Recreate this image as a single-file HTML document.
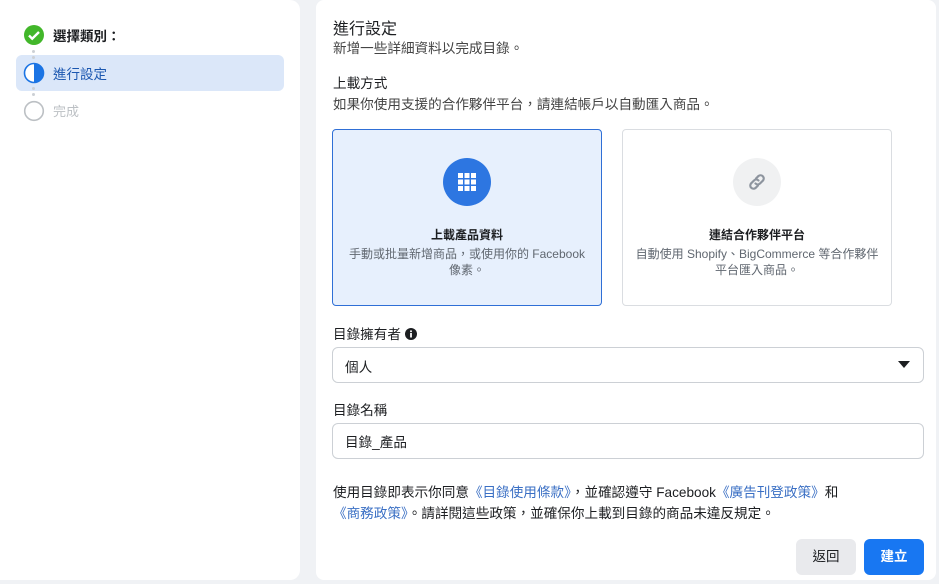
<!DOCTYPE html>
<html><head><meta charset="utf-8"><style>
*{box-sizing:border-box;margin:0;padding:0}
body{width:939px;height:584px;background:#f0f2f5;font-family:"Liberation Sans","Noto Sans CJK TC",sans-serif;color:#1c1e21;position:relative;overflow:hidden;font-size:13px}
.lp{position:absolute;left:0;top:0;width:300px;height:580px;background:#fff;border-radius:0 10px 10px 0}
.rp{position:absolute;left:316px;top:0;width:620px;height:580px;background:#fff;border-radius:8px}
.a{position:absolute;white-space:nowrap}
.t{font-size:13.6px}
.sel{position:absolute;left:16px;top:55px;width:268px;height:36px;background:#dbe7f9;border-radius:6px}
.dot{position:absolute;left:32px;width:3px;height:3px;border-radius:2px;background:#ccd0d5}
.card{position:absolute;top:129px;width:270px;height:177px;border-radius:4px;text-align:center}
.box{position:absolute;left:332px;width:592px;height:36px;border:1px solid #ccd0d5;border-radius:6px}
.blue{color:#3a6fc4}
</style></head><body>
<div class="lp">
<div class="sel"></div>
<svg class="a" style="left:23px;top:24px" width="22" height="22"><circle cx="11" cy="11" r="10" fill="#42b72a"/><path d="M6 11.5l3.2 3.2L16 8" stroke="#fff" stroke-width="2.4" fill="none"/></svg>
<div class="a" style="left:53px;top:25px;font-size:13.5px;font-weight:bold">選擇類別：</div>
<div class="dot" style="top:50px"></div><div class="dot" style="top:56px"></div>
<svg class="a" style="left:23px;top:62px" width="22" height="22"><circle cx="11" cy="11" r="9.5" fill="#fff" stroke="#1b74e4" stroke-width="1.6"/><path d="M11 1.5a9.5 9.5 0 0 1 0 19z" fill="#1b74e4"/></svg>
<div class="a" style="left:53px;top:63px;color:#1b57b0;font-size:13.5px">進行設定</div>
<div class="dot" style="top:87px"></div><div class="dot" style="top:93px"></div>
<svg class="a" style="left:23px;top:100px" width="22" height="22"><circle cx="11" cy="11" r="9.3" fill="#fff" stroke="#bcc0c4" stroke-width="1.6"/></svg>
<div class="a" style="left:53px;top:101px;color:#bcc0c4">完成</div>
</div>
<div class="rp"></div>
<div class="a" style="left:333px;top:15px;font-size:16px">進行設定</div>
<div class="a t" style="left:333px;top:37px;color:#444">新增一些詳細資料以完成目錄。</div>
<div class="a t" style="left:333px;top:72px">上載方式</div>
<div class="a t" style="left:333px;top:93px;color:#444">如果你使用支援的合作夥伴平台，請連結帳戶以自動匯入商品。</div>
<div class="card" style="left:332px;background:#e7f0fd;border:1px solid #2f6fd6">
<svg style="position:absolute;left:110px;top:28px" width="48" height="48"><circle cx="24" cy="24" r="24" fill="#2d76e1"/><g fill="#fff"><rect x="15" y="15" width="5" height="5"/><rect x="21.5" y="15" width="5" height="5"/><rect x="28" y="15" width="5" height="5"/><rect x="15" y="21.5" width="5" height="5"/><rect x="21.5" y="21.5" width="5" height="5"/><rect x="28" y="21.5" width="5" height="5"/><rect x="15" y="28" width="5" height="5"/><rect x="21.5" y="28" width="5" height="5"/><rect x="28" y="28" width="5" height="5"/></g></svg>
<div style="position:absolute;left:0;right:0;top:96px;font-weight:bold;font-size:12px">上載產品資料</div>
<div style="position:absolute;left:10px;right:10px;top:116px;font-size:12px;color:#606770;line-height:16px">手動或批量新增商品，或使用你的 Facebook 像素。</div>
</div>
<div class="card" style="left:622px;background:#fff;border:1px solid #dadde1">
<svg style="position:absolute;left:110px;top:28px" width="48" height="48"><circle cx="24" cy="24" r="24" fill="#f0f1f2"/><g stroke="#8d949e" stroke-width="2.2" fill="none" stroke-linecap="round"><path d="M23 20.5l2.5-2.5a3.2 3.2 0 0 1 4.5 4.5l-3 3a3.2 3.2 0 0 1-4.5 0"/><path d="M25 27.5l-2.5 2.5a3.2 3.2 0 0 1-4.5-4.5l3-3a3.2 3.2 0 0 1 4.5 0"/></g></svg>
<div style="position:absolute;left:0;right:0;top:96px;font-weight:bold;font-size:12px">連結合作夥伴平台</div>
<div style="position:absolute;left:10px;right:10px;top:116px;font-size:12px;color:#606770;line-height:16px">自動使用 Shopify、BigCommerce 等合作夥伴平台匯入商品。</div>
</div>
<div class="a t" style="left:333px;top:323px">目錄擁有者 <svg width="12" height="12" style="vertical-align:-1px"><circle cx="6" cy="6" r="6" fill="#1c1e21"/><rect x="5.1" y="5" width="1.8" height="4.5" fill="#fff"/><circle cx="6" cy="3.2" r="1" fill="#fff"/></svg></div>
<div class="box" style="top:347px"></div>
<div class="a t" style="left:345px;top:356px">個人</div>
<svg class="a" style="left:898px;top:361px" width="12" height="8"><path d="M0 0h12L6 7z" fill="#1c1e21"/></svg>
<div class="a t" style="left:333px;top:399px">目錄名稱</div>
<div class="box" style="top:423px"></div>
<div class="a t" style="left:345px;top:431px">目錄_產品</div>
<div class="a t" style="left:333px;top:482px;line-height:21px">使用目錄即表示你同意<span class="blue">《目錄使用條款》</span>，並確認遵守 Facebook<span class="blue">《廣告刊登政策》</span>和<br><span class="blue">《商務政策》</span>。請詳閱這些政策，並確保你上載到目錄的商品未違反規定。</div>
<div class="a" style="left:796px;top:539px;width:60px;height:36px;background:#e9eaed;border-radius:6px;text-align:center;line-height:36px;font-size:13.5px">返回</div>
<div class="a" style="left:864px;top:539px;width:60px;height:36px;background:#1877f2;border-radius:6px;text-align:center;line-height:36px;color:#fff;font-weight:bold;font-size:13.5px">建立</div>
</body></html>
